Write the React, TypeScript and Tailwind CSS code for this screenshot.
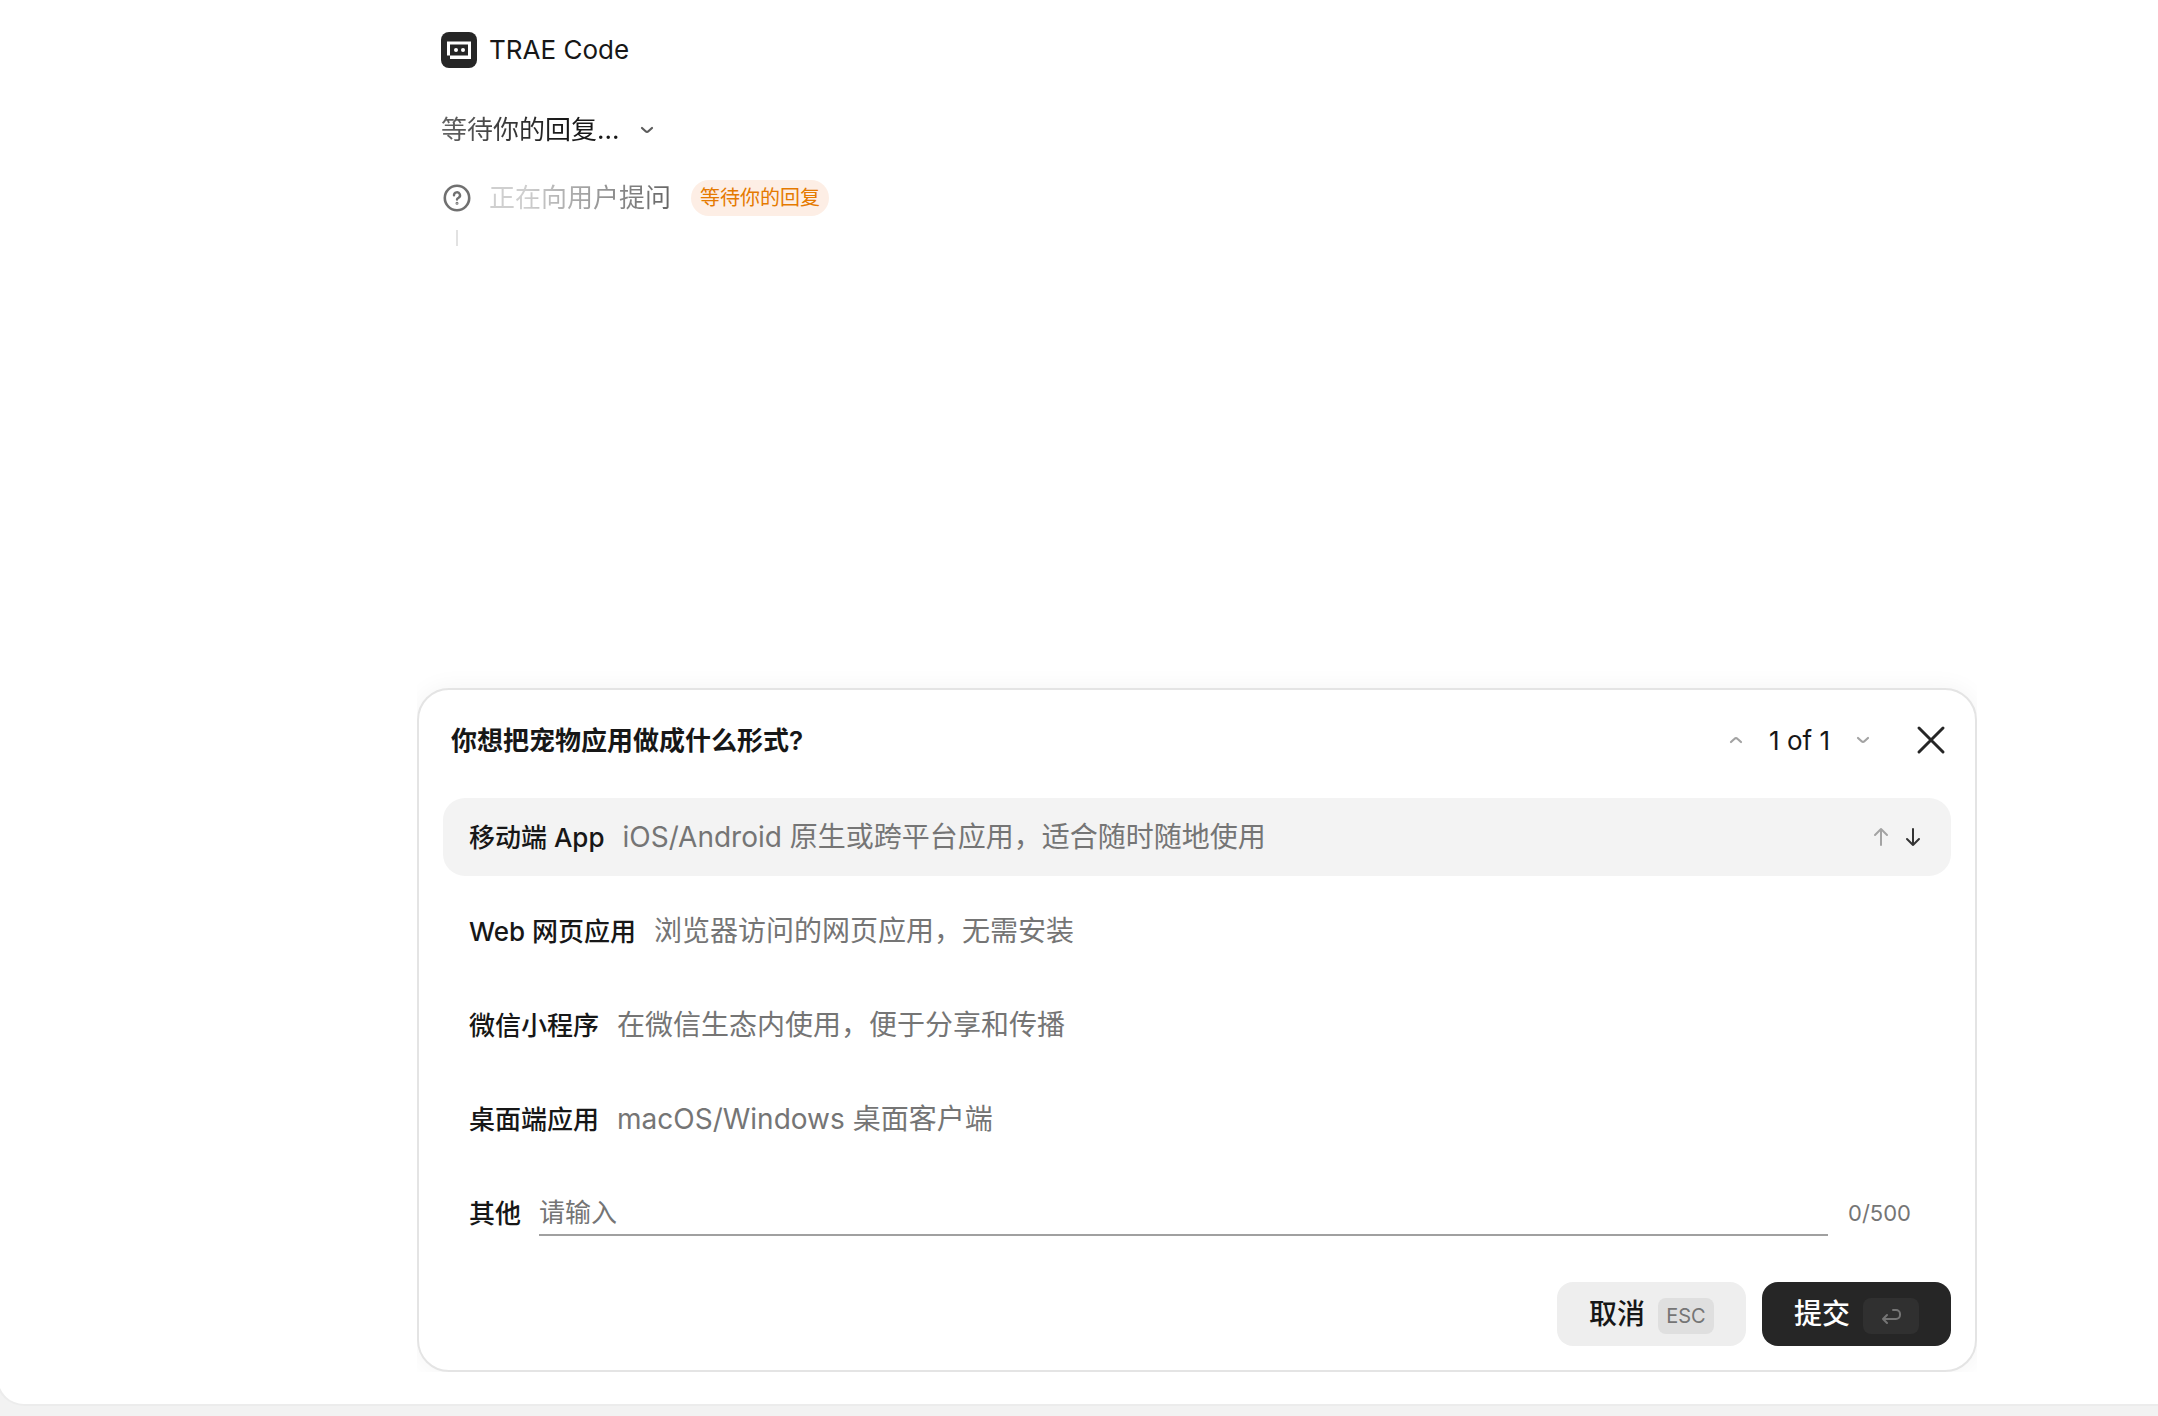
import { useState } from 'react';

// 선택지 목록
const options = [
  { id: 'app', title: '移动端 App', desc: 'iOS/Android 原生或跨平台应用，适合随时随地使用' },
  { id: 'web', title: 'Web 网页应用', desc: '浏览器访问的网页应用，无需安装' },
  { id: 'mini', title: '微信小程序', desc: '在微信生态内使用，便于分享和传播' },
  { id: 'desktop', title: '桌面端应用', desc: 'macOS/Windows 桌面客户端' },
];

const MAX_LENGTH = 500;

function Chevron({ up = false, className = '' }: { up?: boolean; className?: string }) {
  return (
    <svg viewBox="0 0 24 24" className={`size-6 ${className}`} fill="none" stroke="currentColor" strokeWidth="2.2" strokeLinecap="round" strokeLinejoin="round">
      <path d={up ? 'M7 14l3.6-3.2a2 2 0 0 1 2.8 0L17 14' : 'M7 10l3.6 3.2a2 2 0 0 0 2.8 0L17 10'} />
    </svg>
  );
}

function Arrow({ up = false, className = '' }: { up?: boolean; className?: string }) {
  return (
    <svg viewBox="0 0 24 24" className={`size-6 ${className}`} fill="none" stroke="currentColor" strokeWidth="2" strokeLinecap="round" strokeLinejoin="round">
      <path d={up ? 'M12 20V4M6 10l6-6 6 6' : 'M12 4v16M6 14l6 6 6-6'} />
    </svg>
  );
}

function Logo() {
  return (
    <svg viewBox="0 0 36 36" className="size-9">
      <rect width="36" height="36" rx="8" fill="#262626" />
      <path fillRule="evenodd" fill="#fff" d="M6 9.5h24V27H9v-3.5H6zM9 12.5v11h18v-11z" />
      <circle cx="15" cy="18" r="2" fill="#fff" />
      <circle cx="22" cy="18" r="2" fill="#fff" />
    </svg>
  );
}

export default function App() {
  const [selected, setSelected] = useState('app');
  const [other, setOther] = useState('');

  return (
    <div className="min-h-screen overflow-hidden bg-[#f2f2f2] pb-[10px] font-[Inter,'Noto_Sans_CJK_SC',sans-serif] text-[#171717]">
      <main className="-ml-1 flex min-h-[calc(100vh-10px)] flex-col rounded-bl-[28px] border-b-2 border-l-2 border-[#ececec] bg-white pb-8 pl-[238px]">
        <div className="mx-auto flex w-full max-w-[1560px] grow flex-col justify-between">
          {/* 대화 영역 */}
          <section className="px-6 pt-8">
            <div className="flex h-9 items-center gap-3">
              <Logo />
              <h1 className="text-[26px] leading-9">TRAE Code</h1>
            </div>

            <button type="button" className="mt-11 flex h-9 items-center gap-4">
              <span className="bg-linear-to-r from-[#666] to-[#171717] to-70% bg-clip-text text-[26px] leading-9 text-transparent">等待你的回复...</span>
              <Chevron className="text-[#5c5c5c]" />
            </button>

            <div className="mt-8 flex h-9 items-center">
              <svg viewBox="0 0 32 32" className="mr-4 size-8" fill="none" stroke="#707070" strokeWidth="2.6" strokeLinecap="round" strokeLinejoin="round">
                <circle cx="16" cy="16" r="12.2" />
                <path d="M13 13.4a3 3 0 1 1 4.6 2.4c-1 .6-1.6 1-1.6 1.7" strokeWidth="2.4" />
                <circle cx="16" cy="21.3" r=".5" strokeWidth="2" />
              </svg>
              <span className="bg-linear-to-r from-[#cfcfcf] from-20% to-[#666] bg-clip-text text-[26px] leading-9 text-transparent">正在向用户提问</span>
              <span className="ml-5 rounded-full bg-[#fdeee5] px-[9px] text-[20px] leading-9 text-[#e57a00]">等待你的回复</span>
            </div>
            <div className="ml-[15px] mt-[14px] h-4 w-[2px] bg-[#e2e2e2]" />
          </section>

          {/* 질문 카드 */}
          <div className="overflow-hidden pt-6">
            <form onSubmit={(e) => e.preventDefault()} className="rounded-[32px] border-2 border-[#e4e4e4] bg-white p-6 shadow-[0_0_24px_rgba(0,0,0,0.05)]">
              <div className="flex h-[52px] items-center justify-between pl-2">
                <h2 className="text-[26px] font-semibold">你想把宠物应用做成什么形式?</h2>
                <div className="flex items-center">
                  <button type="button" aria-label="上一题" className="text-[#a3a3a3]"><Chevron up /></button>
                  <span className="mx-[21px] text-[26px]">1 of 1</span>
                  <button type="button" aria-label="下一题" className="text-[#a3a3a3]"><Chevron /></button>
                  <button type="button" aria-label="关闭" className="ml-9">
                    <svg viewBox="0 0 40 40" className="size-10" fill="none" stroke="#262626" strokeWidth="3" strokeLinecap="round">
                      <path d="M8 8l24 24M32 8L8 32" />
                    </svg>
                  </button>
                </div>
              </div>

              <ul className="mt-8 flex flex-col gap-4">
                {options.map((option) => (
                  <li key={option.id} className={`flex h-[78px] items-center rounded-[22px] px-[26px] ${selected === option.id ? 'bg-[#f3f3f3]' : ''}`}>
                    <button type="button" onClick={() => setSelected(option.id)} className="flex grow items-baseline gap-[18px] text-left">
                      <span className="text-[26px] font-medium">{option.title}</span>
                      <span className="text-[28px] text-[#757575]">{option.desc}</span>
                    </button>
                    {selected === option.id && (
                      <div className="flex gap-2">
                        <button type="button" aria-label="上移" className="text-[#a3a3a3]"><Arrow up /></button>
                        <button type="button" aria-label="下移" className="text-[#333]"><Arrow /></button>
                      </div>
                    )}
                  </li>
                ))}
                <li className="flex h-[78px] items-center px-[26px]">
                  <label htmlFor="other" className="text-[26px] font-medium">其他</label>
                  <input
                    id="other"
                    value={other}
                    maxLength={MAX_LENGTH}
                    onChange={(e) => setOther(e.target.value)}
                    placeholder="请输入"
                    className="ml-[18px] h-[46px] min-w-0 grow border-b-2 border-[#a0a0a0] text-[26px] outline-none placeholder:text-[#757575]"
                  />
                  <span className="ml-5 mr-[14px] text-[22px] text-[#757575]">{other.length}/{MAX_LENGTH}</span>
                </li>
              </ul>

              <div className="mt-[30px] flex justify-end gap-4">
                <button type="button" className="flex h-16 items-start gap-[13px] rounded-2xl bg-[#eee] px-8 pt-4 text-[28px] font-medium leading-8">
                  取消
                  <kbd className="h-9 w-14 rounded-lg bg-[#dfdfdf] text-center font-[Inter] text-[20px] font-normal leading-9 text-[#757575]">ESC</kbd>
                </button>
                <button type="submit" className="flex h-16 items-start gap-[13px] rounded-2xl bg-[#262626] px-8 pt-4 text-[28px] font-medium leading-8 text-white">
                  提交
                  <kbd className="flex h-9 w-14 items-center justify-center rounded-lg bg-[#303030]">
                    <svg viewBox="0 0 24 24" className="size-6" fill="none" stroke="#757575" strokeWidth="2" strokeLinecap="round" strokeLinejoin="round">
                      <path d="M8 11l-4 4 4 4M4 15h13a4 4 0 0 0 4-4v-1a4 4 0 0 0-4-4h-3" />
                    </svg>
                  </kbd>
                </button>
              </div>
            </form>
          </div>
        </div>
      </main>
    </div>
  );
}
